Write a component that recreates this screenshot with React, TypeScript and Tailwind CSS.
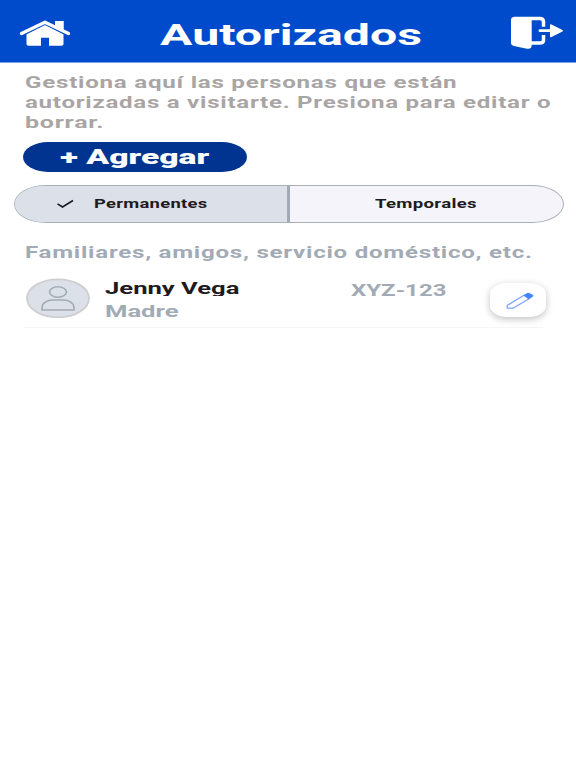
import React from "react";

function Wide({ children, className = "" }: { children: React.ReactNode; className?: string }) {
  return <span className={`block w-max origin-left whitespace-nowrap ${className}`}>{children}</span>;
}

function HomeIcon() {
  return (
    <svg className="ml-[19px] mt-[20px] h-[27px] w-[52px]" viewBox="0 0 52 27" fill="#fff">
      <path d="M7.500 14 26 4.500l18.500 9.500v9.800q0 2-3 2H30v-8h-8v8H10.500q-3 0-3-2Z" />
      <path d="M36 1h8.500v9L36 5.800Z" />
      <path d="M2.500 14 26 2.300l23.500 11.700" fill="none" stroke="#004bcb" strokeWidth="4.800" />
      <path d="M2.500 13.500 26 2.300l23.500 11.200" fill="none" stroke="#fff" strokeWidth="3.400" strokeLinecap="round" strokeLinejoin="round" />
      <path d="M36 1h8.500v9L36 6Z" />
    </svg>
  );
}

function ExitIcon() {
  return (
    <svg className="mr-[12px] mt-[16px] h-[34px] w-[54px]" viewBox="0 0 54 34" fill="#fff">
      <path d="M4 1h14l3.700 3v25c0 3-1.300 4.300-4.700 3.700L5 30.300q-4-.8-4-3.300V4q0-3 3-3Z" />
      <path d="M4 2.500h25.500q4 0 4 3.200v5M20 27h9.500q4 0 4-2.500v-5.500" fill="none" stroke="#fff" strokeWidth="3.500" />
      <path d="M30 14.700H41" stroke="#fff" strokeWidth="2.800" strokeLinecap="round" />
      <path d="M40 9q0-1.200 1.500-.4L52.500 14q1 .7 0 1.400l-11 5.500q-1.500.8-1.500-.4Z" />
    </svg>
  );
}

export default function App() {
  return (
    <div className="h-[768px] w-[576px] overflow-hidden bg-white font-['Roboto',sans-serif]">
      <header className="flex h-[63px] justify-between border-b border-[#7c9fe2] bg-[#004bcb] text-white">
        <div className="w-[160px]"><HomeIcon /></div>
        <h1 className="mt-[17px] w-[261px] text-[29.500px] font-bold leading-[37px]">
          <Wide className="scale-x-[1.635]">Autorizados</Wide>
        </h1>
        <div className="flex w-[155px] justify-end"><ExitIcon /></div>
      </header>

      <p className="ml-[25px] mt-[10px] text-[16px] font-bold leading-[20px] tracking-[0.5px] text-[#aaa5a5]">
        <Wide className="scale-x-[1.508]">Gestiona aquí las personas que están</Wide>
        <Wide className="scale-x-[1.503]">autorizadas a visitarte. Presiona para editar o</Wide>
        <Wide className="scale-x-[1.56]">borrar.</Wide>
      </p>

      <button className="ml-[23px] mt-[9px] block h-[30px] w-[224px] bg-[#003490] pl-[37px] text-left text-[21px] font-black leading-[30px] text-white [border-radius:25px/15px]">
        <Wide className="scale-x-[1.6]">+ Agregar</Wide>
      </button>

      <div className="ml-[14px] mt-[13px] flex h-[38px] w-[550px] overflow-hidden border border-[#a8b0ba] bg-[#f5f4fa] text-[12px] font-bold leading-[37px] tracking-[0.2px] text-[#1d1b20] [border-radius:32px/19px]">
        <div className="flex w-[275px] border-r-[3px] border-[#a2abb5] bg-[#dce0e8]">
          <svg className="ml-[42px] mt-[13px] h-[10px] w-[17px]" viewBox="0 0 17 10" fill="none" stroke="#1d1b20" strokeWidth="1.600">
            <path d="m.5 4.800 5 3.200L16 1.500" />
          </svg>
          <Wide className="ml-[20px] scale-x-[1.53]">Permanentes</Wide>
        </div>
        <Wide className="ml-[85px] scale-x-[1.55]">Temporales</Wide>
      </div>

      <h2 className="ml-[25px] mt-[20px] text-[16px] font-bold leading-[20px] tracking-[0.5px] text-[#a2abb5]">
        <Wide className="scale-x-[1.506]">Familiares, amigos, servicio doméstico, etc.</Wide>
      </h2>

      <div className="ml-[23px] mt-[9px] flex h-[56px] w-[520px] border-b border-[#f5f5f5]">
        <svg className="ml-[3px] mt-[6px] h-[40px] w-[64px] shrink-0" viewBox="0 0 64 40" fill="#dce0e8">
          <ellipse cx="32" cy="20.300" rx="31" ry="19" stroke="#cecdcf" strokeWidth="1.800" />
          <g stroke="#a2abb5" strokeWidth="1.600">
            <ellipse cx="32" cy="14" rx="8.500" ry="5.200" />
            <path d="M16 32v-2.500c0-4.500 5-7.500 11-7.500h10c6 0 11 3 11 7.500v2.500Z" />
          </g>
        </svg>
        <div className="w-[246px] shrink-0 pl-[15px] pt-[8px] font-bold">
          <div className="h-[16px] overflow-hidden text-[16px] leading-[18px] text-[#1d1b20]">
            <Wide className="scale-x-[1.6]">Jenny Vega</Wide>
          </div>
          <div className="mt-[6px] text-[16px] leading-[20px] text-[#a2abb5]">
            <Wide className="scale-x-[1.6]">Madre</Wide>
          </div>
        </div>
        <div className="w-[154px] shrink-0 pl-[15px] pt-[9px] text-[16px] font-bold leading-[20px] text-[#a2abb5]">
          <Wide className="scale-x-[1.5]">XYZ-123</Wide>
        </div>
        <button className="mt-[11px] flex h-[34px] w-[56px] shrink-0 items-center justify-center bg-white shadow-[0_2px_7px_rgba(0,0,0,0.25)] [border-radius:17px/11px]">
          <svg className="ml-[4px] mt-[2px] h-[18px] w-[30px]" viewBox="0 0 30 18" fill="none">
            <path d="M2.200 13.500 19 3.200l5 3.600L8 16.200H2.200Z" stroke="#7ba3ff" strokeWidth="1.300" strokeLinejoin="round" />
            <path d="m18.500 3.200 3.700-2.300q1-.5 2 0l3.800 2.200q1 .7 0 1.400L24 7.300Z" fill="#4285ff" />
          </svg>
        </button>
      </div>
    </div>
  );
}
